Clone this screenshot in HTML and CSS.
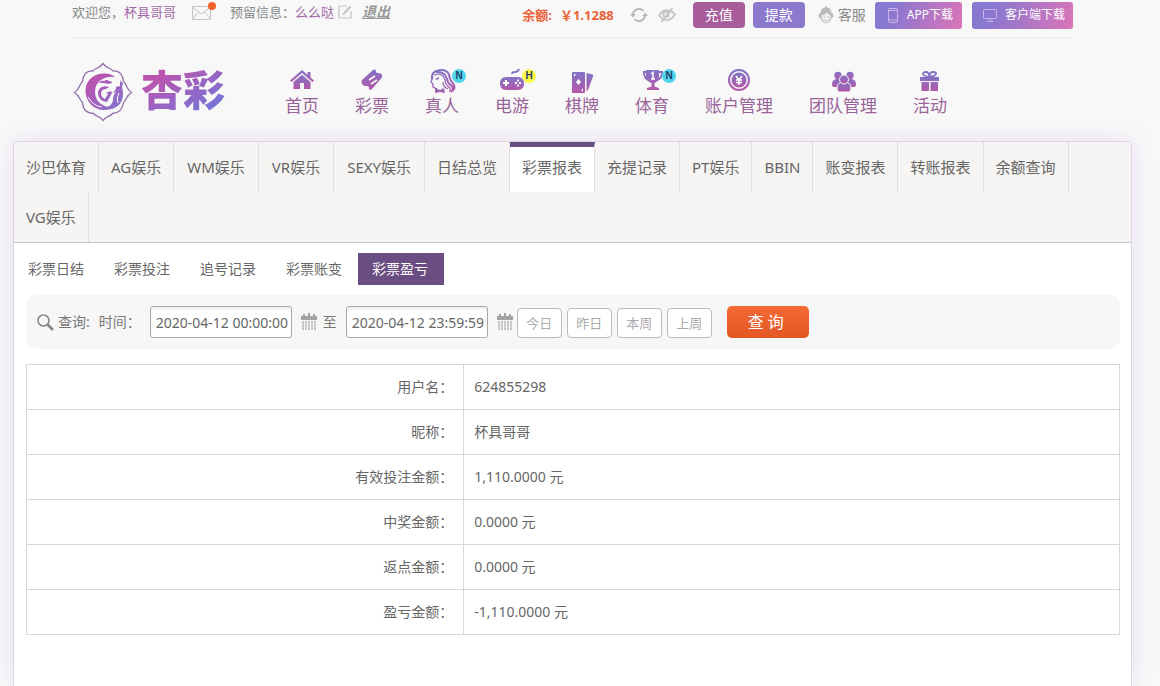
FILE: index.html
```html
<!DOCTYPE html>
<html lang="zh-CN">
<head>
<meta charset="utf-8">
<title>杏彩 - 彩票盈亏</title>
<meta name="viewport" content="width=device-width, initial-scale=1">
<link rel="stylesheet" href="styles.css">
</head>
<body>
<svg class="defs" width="0" height="0" aria-hidden="true">
  <defs>
    <linearGradient id="brand" x1="0" y1="0" x2="0" y2="1">
      <stop offset="0" stop-color="#8273c6"/><stop offset="1" stop-color="#b457a8"/>
    </linearGradient>
    <linearGradient id="mark" gradientUnits="userSpaceOnUse" x1="14" y1="14" x2="48" y2="46">
      <stop offset="0.1" stop-color="#bd52ae"/><stop offset="1" stop-color="#8273cf"/>
    </linearGradient>
    <symbol id="calendar" viewBox="0 0 16 18">
      <path fill="#a3a3a3" d="M0 3h2V1h2v2h3V0h2v3h3V1h2v2h2v4H0z"/>
      <path stroke="#c4c4c4" stroke-width="2" d="M2 8v9M5 8v9M8 8v9M11 8v9M14 8v9"/>
      <path stroke="#ededed" stroke-width=".6" d="M0 11h16M0 14h16"/>
    </symbol>
  </defs>
</svg>
<header class="header">
  <div class="topbar">
    <div class="greeting">
      <span>欢迎您，<a class="accent" href="#">杯具哥哥</a></span>
      <a class="mail" href="#" aria-label="消息">
        <svg width="20" height="15" viewBox="0 0 20 15" fill="none" stroke="#c5c5c5"><path d="M.5 1.5h18v13H.5zM.5 2l9 7 9-7M.5 14l6-7M18.500 14l-6-7"/></svg>
        <i class="mail-dot"></i>
      </a>
      <span>预留信息<span class="colon">：</span><span class="accent">么么哒</span></span>
      <a class="edit" href="#" aria-label="编辑">
        <svg width="14" height="14" viewBox="0 0 14 14" fill="none" stroke="#c4c4c4"><path stroke-width="1.200" d="M9 1H1v12h12V6"/><path stroke-width="2" d="M5 9.500L12.500 1.500"/></svg>
      </a>
      <a class="logout" href="#">退出</a>
    </div>
    <div class="account">
      <span class="balance"><span>余额:</span><span>￥1.1288</span></span>
      <button class="icon-button refresh" type="button" aria-label="刷新">
        <svg width="18" height="16" viewBox="0 0 18 16" fill="none" stroke="#b4b4b4" stroke-width="1.800"><path d="M3 8A6 6 0 0 1 13.500 4M15 8A6 6 0 0 1 4.500 12"/><path fill="#b4b4b4" stroke="none" d="M0 7h5.500L3 10.500zM12.500 9H18l-3-3.500z"/></svg>
      </button>
      <button class="icon-button hide" type="button" aria-label="隐藏余额">
        <svg width="18" height="16" viewBox="0 0 18 16" fill="none" stroke="#c4c4c4" stroke-width="1.800"><path d="M1 8.500Q4 3.500 9 3.500T17 7.500Q13.500 13 9 13T1 8.500z"/><circle cx="8" cy="7.500" r="2.600"/><path d="M3.500 15L14.500 1"/></svg>
      </button>
      <button class="pill deposit" type="button">充值</button>
      <button class="pill withdraw" type="button">提款</button>
      <a class="service" href="#">
        <svg width="16" height="18" viewBox="0 0 16 18"><path fill="#bbb" d="M8 0q1 0 1 1.500c3 .3 4.500 2.500 4.500 5.500q2 0 2 2.500t-2 2.500Q12 16.500 8 17.500 4 16.500 2.500 12 .5 12 .5 9.500T2.500 7c0-3 1.500-5.200 4.500-5.500Q7 0 8 0z"/><path fill="#f2f2f2" d="M3.500 9.500Q7 9 9 6.500q1.500 2 3.500 3-.3 6-4.500 7.300Q4 15 3.500 9.500z"/><path stroke="#bbb" fill="none" d="M5.500 11H7M9.500 11H11M6.500 14q1.500 1 3 0"/></svg>
        客服
      </a>
      <a class="download" href="#">
        <svg width="10" height="15" viewBox="0 0 10 15" fill="none" stroke="#cdb4ec"><rect x=".5" y=".5" width="9" height="14" rx="1.500"/><path d="M.5 2.500h9M.5 12h9"/></svg>
        APP下载
      </a>
      <a class="download" href="#">
        <svg width="14" height="13" viewBox="0 0 14 13" fill="none" stroke="#cdb4ec"><rect x=".5" y=".5" width="13" height="9" rx="1"/><path d="M7 10v2M3.500 12.300h7"/></svg>
        客户端下载
      </a>
    </div>
  </div>
  <div class="masthead">
    <a class="logo" href="#">
      <svg width="60" height="60" viewBox="0 0 60 60" aria-hidden="true">
        <path fill="none" stroke="#9270ab" stroke-width="1.300" d="M30 1.500C34 7 38 6 40 9Q49 8 50.500 19.500C54 22 53 27 58.500 30.500 53 34 54 37 50.500 40.500Q49 51 39.500 51.500C37 55 33 54 30 58.500 27 54 23 55 20.500 51.500Q10 51 9.500 40.500C6 37 7 34 1.500 30.500 7 27 6 22 9.500 19.500Q11 8 20 9C22 6 26 7 30 1.500z"/>
        <g fill="url(#mark)">
          <path d="M42 15Q38 11 30 11.500C19 12 12 20 12.500 30S21 48 31 48q6 0 10-2-7 0-11-3-8-4-8-13 0-8 6-12 6-4 14-3z"/>
          <path d="M26 21q2-3 5-2 3-2 5 0 3 0 3 2l-4 1-4-1z"/>
          <path d="M27 26q4-3 9-1l-3 2q-4 0-5 4 0 4 4 6l3-5-2-1 5-2 1 2-5 9q-8-1-9-8 0-4 2-6z"/>
          <path d="M47 19l3 2-1 4q2 8 0 13-3 8-12 9l-5-2q7 0 8-7 0-5 3-8l-4 1q4-2 4-6l4-1z"/>
        </g>
        <path fill="none" stroke="#f8f8f8" d="M46 31q-3 5-1 10M15 35q5 9 14 10"/>
      </svg>
      <span class="logo-name">杏彩</span>
    </a>
    <nav class="nav" aria-label="主导航">
      <a class="nav-item" href="#"><span class="nav-icon"><svg width="26" height="24" viewBox="0 0 26 24" fill="url(#brand)"><path d="M13 2L1 12.500l1.500 1.500L13 5l10.500 9 1.500-1.500-3.500-3V4h-3v3z"/><path d="M4.500 14L13 6.700l8.500 7.300v7H15v-6h-4v6H4.500z"/></svg></span>首页</a>
      <a class="nav-item" href="#"><span class="nav-icon"><svg class="ticket" width="26" height="24" viewBox="0 0 26 24"><path fill="url(#brand)" d="M3 12L14 2q1.500-1 3 .500-.500 2.500 2 2.500l3 .500q2 1.500 1 4L13 21q-2 1.500-3 0 .5-3.500-3-3-2 .5-4-2-1-2 0-4z"/><path stroke="#f7f7f7" stroke-width="1.800" d="M10 12l6-4M12 16l6-4"/></svg></span>彩票</a>
      <a class="nav-item" href="#"><span class="nav-icon"><svg width="28" height="28" viewBox="0 0 28 28" fill="none" stroke="url(#brand)"><path stroke-width="2" d="M4 11Q3 4 10 2.500q8-2 11 4 1 6 4 9 3 4 0 7M8 4q9-1 11 7 1 5 5 7 2 3-1 6"/><path stroke-width="1.300" d="M6 7q9-3 11 5 1 6 5 8v4M5 9l-2 5 2 2v3l4 2M8 12q1-2 3-2M15 14q0 5 5 7"/><path fill="url(#brand)" stroke="none" d="M7 20l5 2 4-2 1 5-5-1-5 1z"/></svg></span>真人<b class="badge new">N</b></a>
      <a class="nav-item" href="#"><span class="nav-icon"><svg width="26" height="24" viewBox="0 0 26 24"><path fill="url(#brand)" d="M7 9h12q6 0 6 6.500T19 22H7q-6 0-6-6.500T7 9z"/><path fill="none" stroke="#8273c6" stroke-width="2" d="M13 6q0-2 3-2t4-3"/><path stroke="#fff" stroke-width="2" d="M4 15h6M7 12v6"/><path stroke="#fff" stroke-width="1.800" d="M16 15h2M20 15h2M19 11.500v2M19 16.500v2"/></svg></span>电游<b class="badge hot">H</b></a>
      <a class="nav-item" href="#"><span class="nav-icon"><svg width="26" height="26" viewBox="0 0 26 26" fill="url(#brand)"><path d="M3 5q0-1 1-1h11q1 0 1 1v19q0 1-1 1H4q-1 0-1-1zM17.500 5l6 1.500q1 .5.7 1.500L19 22l-1.500 1z"/><path fill="#fff" d="M9.500 11l2.500 3-2.500 3L7 14zM5 6h2L5 9zM14 23h-2l2-3z"/></svg></span>棋牌</a>
      <a class="nav-item" href="#"><span class="nav-icon"><svg width="26" height="24" viewBox="0 0 26 24"><path fill="url(#brand)" d="M7 2h13v7q-1 5-4.500 6v3.500L20 20v2H8v-2l4.500-1.500V15Q8 14 7 9z"/><path fill="none" stroke="#8c6dc0" stroke-width="2" d="M8 4H5q0 7 5 8M19 4h4q0 7-5 8"/><path fill="none" stroke="#fff" stroke-width="1.500" d="M12 6l2-1.500V11M12 11h4"/></svg></span>体育<b class="badge new">N</b></a>
      <a class="nav-item" href="#"><span class="nav-icon"><svg width="26" height="24" viewBox="0 0 26 24"><circle cx="13" cy="12" r="10" fill="none" stroke="url(#brand)" stroke-width="2"/><circle cx="13" cy="12" r="7.500" fill="url(#brand)"/><path fill="none" stroke="#fff" stroke-width="1.500" d="M10 8l3 4 3-4M13 12v5M10 12h6M10 14.500h6"/></svg></span>账户管理</a>
      <a class="nav-item" href="#"><span class="nav-icon"><svg width="26" height="24" viewBox="0 0 26 24" fill="url(#brand)"><circle cx="8" cy="7.500" r="3.700"/><circle cx="20" cy="7.500" r="3.700"/><path d="M2 16q0-5 6-5 5 0 5 5v3H4q-2 0-2-3zM26 16q0-5-6-5-5 0-5 5v3h9q2 0 2-3z"/><g stroke="#f7f7f7"><path d="M7 20q0-6 7-6t7 6q0 4-2 4H9q-2 0-2-4z"/><circle cx="14" cy="11.500" r="4.500"/></g></svg></span>团队管理</a>
      <a class="nav-item" href="#"><span class="nav-icon"><svg width="26" height="24" viewBox="0 0 26 24" fill="url(#brand)"><path d="M3 9h19v4H3zM4.500 14H12v9H4.500zM13.500 14H21v9h-7.500z"/><path fill="none" stroke="#8273c6" stroke-width="1.800" d="M12.500 9Q6 8 6 6t3-2 3.500 5q0-5 3.500-5t3 2-6.500 3"/></svg></span>活动</a>
    </nav>
  </div>
</header>
<main class="panel">
  <nav class="tabs" aria-label="报表">
    <a class="tab" href="#">沙巴体育</a><a class="tab" href="#">AG娱乐</a><a class="tab roomy" href="#">WM娱乐</a><a class="tab roomy" href="#">VR娱乐</a><a class="tab roomy" href="#">SEXY娱乐</a><a class="tab" href="#">日结总览</a><a class="tab active" href="#" aria-current="page">彩票报表</a><a class="tab" href="#">充提记录</a><a class="tab" href="#">PT娱乐</a><a class="tab" href="#">BBIN</a><a class="tab" href="#">账变报表</a><a class="tab" href="#">转账报表</a><a class="tab" href="#">余额查询</a><a class="tab" href="#">VG娱乐</a>
  </nav>
  <nav class="subtabs" aria-label="彩票报表">
    <a class="subtab" href="#">彩票日结</a><a class="subtab" href="#">彩票投注</a><a class="subtab" href="#">追号记录</a><a class="subtab" href="#">彩票账变</a><a class="subtab active" href="#" aria-current="page">彩票盈亏</a>
  </nav>
  <form class="search">
    <svg class="search-icon" width="17" height="17" viewBox="0 0 17 17" fill="none" stroke="#888"><circle cx="6.500" cy="6.500" r="5.500" stroke-width="1.600"/><path stroke-width="2.600" d="M10.500 10.500l5.500 5.500"/></svg>
    <span class="search-title">查询:</span>
    <label class="search-label" for="from">时间<span class="colon">：</span></label>
    <input class="date" id="from" type="text" value="2020-04-12 00:00:00">
    <svg class="calendar" width="16" height="18"><use href="#calendar"/></svg>
    <label class="to" for="until">至</label>
    <input class="date" id="until" type="text" value="2020-04-12 23:59:59">
    <svg class="calendar" width="16" height="18"><use href="#calendar"/></svg>
    <div class="ranges">
      <button class="range" type="button">今日</button>
      <button class="range" type="button">昨日</button>
      <button class="range" type="button">本周</button>
      <button class="range" type="button">上周</button>
    </div>
    <button class="submit" type="submit">查 询</button>
  </form>
  <table class="report">
    <tbody>
      <tr><th scope="row">用户名<span class="colon">：</span></th><td>624855298</td></tr>
      <tr><th scope="row">昵称<span class="colon">：</span></th><td>杯具哥哥</td></tr>
      <tr><th scope="row">有效投注金额<span class="colon">：</span></th><td>1,110.0000 元</td></tr>
      <tr><th scope="row">中奖金额<span class="colon">：</span></th><td>0.0000 元</td></tr>
      <tr><th scope="row">返点金额<span class="colon">：</span></th><td>0.0000 元</td></tr>
      <tr><th scope="row">盈亏金额<span class="colon">：</span></th><td>-1,110.0000 元</td></tr>
    </tbody>
  </table>
</main>
</body>
</html>
```
FILE: styles.css
```css
* { box-sizing: border-box; }

body {
  margin: 0;
  padding: 0 15px 0 0;
  min-height: 100vh;
  display: flex;
  flex-direction: column;
  overflow-x: hidden;
  background: #f8f8f8;
  color: #666;
  font: 14px/24px "Noto Sans", "Noto Sans CJK SC", sans-serif;
}

a { color: inherit; text-decoration: none; }
button, input { font: inherit; margin: 0; }
button { cursor: pointer; }
svg { display: block; flex: none; }
.defs { position: absolute; }
.colon { font-family: "Noto Sans CJK TC", sans-serif; line-height: 1; }

.header {
  width: 100%;
  max-width: 1001px;
  margin: 0 auto;
}

/* Account bar */
.topbar {
  display: flex;
  justify-content: space-between;
  height: 38px;
  border-bottom: 1px solid #ededed;
  font-size: 13px;
  color: #888;
  white-space: nowrap;
}
.greeting { display: flex; align-items: center; height: 24px; }
.accent { color: #a468a8; }
.mail { position: relative; margin: 0 18px 0 16px; }
.mail-dot {
  position: absolute;
  top: -3px;
  right: -4px;
  width: 8px;
  height: 8px;
  border-radius: 50%;
  background: #f4622c;
}
.edit { margin: 0 10px 0 4px; }
.logout {
  color: #999;
  font-size: 14px;
  font-weight: bold;
  font-style: italic;
  text-decoration: underline;
}
.account { display: flex; align-items: center; height: 30px; }
.balance { display: flex; gap: 8px; color: #ec6238; font-weight: bold; margin-right: 16px; }
.icon-button { border: 0; padding: 0; background: none; margin-right: 10px; }
.hide { margin-right: 17px; }
.pill {
  width: 52px;
  height: 26px;
  margin-right: 8px;
  padding: 0;
  border: 0;
  border-radius: 4px;
  color: #fff;
  font-size: 14px;
}
.deposit { background: #a85c9c; }
.withdraw { background: #8c78cd; }
.service {
  display: flex;
  align-items: center;
  gap: 4px;
  margin: 0 9px 0 5px;
  font-size: 14px;
}
.download {
  display: flex;
  align-items: center;
  gap: 8px;
  height: 27px;
  padding: 0 8px 0 13px;
  border-radius: 3px;
  background: linear-gradient(110deg, #8878d0 20%, #dc74b8);
  color: #fff;
  font-size: 12px;
}
.download:not(:last-child) { padding-right: 9px; gap: 9px; }
.download + .download { margin-left: 10px; padding-left: 11px; }

/* Logo and main navigation */
.masthead { display: flex; height: 103px; }
.logo {
  display: flex;
  align-items: center;
  gap: 8px;
  height: 60px;
  margin: 24px 42px 0 1px;
}
.logo-name {
  padding-bottom: 8px;
  font: 900 42px/60px "Noto Sans CJK SC", sans-serif;
  background: linear-gradient(150deg, #ba54af 25%, #7575d8 80%);
  background-clip: text;
  -webkit-background-clip: text;
  color: transparent;
}
.nav { display: flex; padding-top: 30px; white-space: nowrap; }
.nav-item {
  position: relative;
  display: flex;
  flex-direction: column;
  align-items: center;
  padding: 0 18px;
  color: #99639a;
  font-size: 17px;
  line-height: 26px;
}
.nav-icon { height: 25px; }
.badge {
  position: absolute;
  top: 1px;
  left: 45px;
  width: 14px;
  height: 14px;
  border-radius: 50%;
  font: bold 10px/14px "Liberation Sans", sans-serif;
  text-align: center;
  color: #263a66;
}
.new { background: #4fd6ec; }
.hot { background: #fbf84c; }

/* Report panel */
.panel {
  flex: 1;
  width: 100%;
  max-width: 1119px;
  margin: 0 auto;
  border: 1px solid #ddd4e2;
  border-bottom: 0;
  border-radius: 4px 4px 0 0;
  background: #fff;
  box-shadow: 0 0 24px rgba(150, 80, 200, 0.15);
}
.tabs {
  display: flex;
  flex-wrap: wrap;
  padding-right: 54px;
  background: #f6f5f4;
  border-bottom: 1px solid #c8c5ca;
  border-radius: 3px 3px 0 0;
}
.tab {
  height: 50px;
  padding: 0 12px;
  border-right: 1px solid #e0dfdf;
  font-size: 15px;
  line-height: 50px;
}
.tab.roomy { padding: 0 13px; }
.tab.active {
  border-top: 5px solid #6a4d82;
  background: #fff;
  line-height: 40px;
}
.subtabs { display: flex; padding-top: 10px; }
.subtab { padding: 0 16px 0 14px; line-height: 32px; }
.subtab.active { background: #6a4d82; color: #fff; }

/* Filter bar */
.search {
  display: flex;
  align-items: center;
  min-height: 54px;
  margin: 10px 11px 15px 12px;
  padding-left: 11px;
  border-radius: 10px;
  background: #f7f7f7;
  color: #777;
}
.search-title { margin: 0 9px 0 4px; }
.search-label { width: 51px; }
.date {
  width: 142px;
  height: 32px;
  padding: 0 1px 0 5px;
  border: 1px solid #aaa;
  border-radius: 3px;
  background: #fff;
  box-shadow: inset 0 2px 3px #eee;
  color: #666;
}
.calendar { margin: 0 6px 0 9px; }
.to { margin-right: 9px; }
.date ~ .date + .calendar { margin-right: 4px; }
.ranges { display: flex; gap: 5px; padding-top: 2px; }
.range {
  width: 45px;
  height: 30px;
  padding: 0;
  border: 1px solid #bbb;
  border-radius: 4px;
  background: #fff;
  color: #aaa;
  font-size: 13px;
}
.submit {
  width: 82px;
  height: 32px;
  margin-left: 15px;
  padding: 0 4px 0 0;
  border: 0;
  border-radius: 5px;
  background: linear-gradient(#f46a35, #e25724);
  color: #fff;
  font-size: 16px;
}

/* Totals */
.report {
  width: calc(100% - 23px);
  margin: 0 11px 20px 12px;
  border-collapse: collapse;
  table-layout: fixed;
}
.report th,
.report td {
  height: 45px;
  padding: 0 10px;
  border: 1px solid #d8d8d8;
  font-weight: normal;
  text-align: left;
}
.report th { width: 40%; text-align: right; }
```
